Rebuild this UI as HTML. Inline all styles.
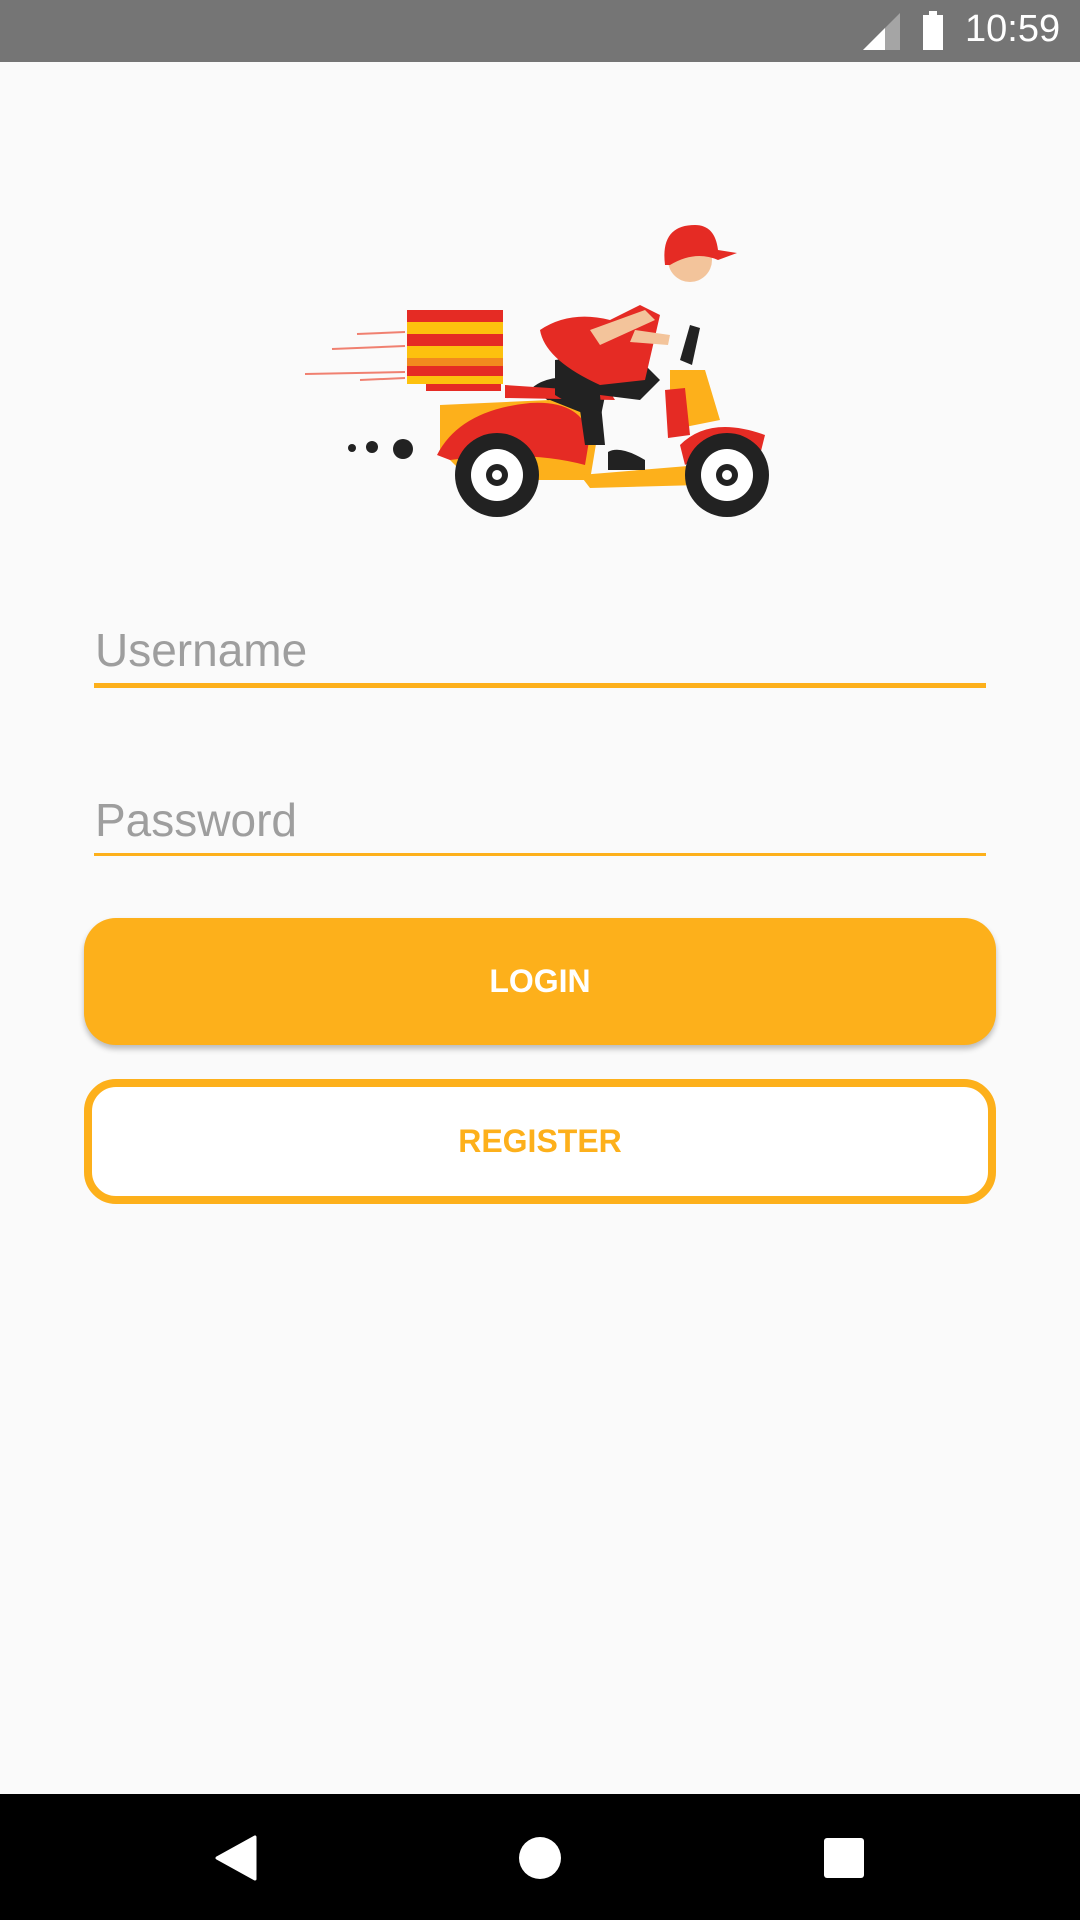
<!DOCTYPE html>
<html><head><meta charset="utf-8"><style>
body{margin:0;width:1080px;height:1920px;background:#fafafa;position:relative;overflow:hidden;font-family:"Liberation Sans",sans-serif}
.sb{position:absolute;left:0;top:0;width:1080px;height:62px;background:#757575}
.nav{position:absolute;left:0;top:1794px;width:1080px;height:126px;background:#000}
.lbl{position:absolute;left:95px;font-size:46px;color:#9e9e9e;line-height:1}
.ul{position:absolute;left:94px;width:892px;background:#fdb01b}
.btn{position:absolute;left:84px;width:912px;box-sizing:border-box;border-radius:32px;display:flex;align-items:center;justify-content:center;font-weight:bold;font-size:32px}
</style></head><body>
<div class="sb">
<svg style="position:absolute;left:863px;top:13px" width="38" height="38"><polygon points="0,37 37,0 37,37" fill="#a5a5a5"/><polygon points="0,37 22,15 22,37" fill="#fff"/></svg>
<div style="position:absolute;left:923px;top:15px;width:20px;height:35px;background:#fff"></div>
<div style="position:absolute;left:929px;top:11px;width:8px;height:5px;background:#fff"></div>
<div style="position:absolute;left:965px;top:8px;color:#fff;font-size:38px">10:59</div>
</div>
<svg style="position:absolute;left:300px;top:220px" width="480" height="300" viewBox="0 0 480 300">
<g stroke="#f08070" stroke-width="2"><line x1="57" y1="114" x2="105" y2="112"/><line x1="32" y1="129" x2="105" y2="126"/><line x1="5" y1="154" x2="105" y2="152"/><line x1="60" y1="160" x2="105" y2="158"/></g>
<rect x="107" y="90" width="96" height="12" fill="#e52b24"/><rect x="107" y="102" width="96" height="12" fill="#fdc10e"/><rect x="107" y="114" width="96" height="12" fill="#e52b24"/><rect x="107" y="126" width="96" height="12" fill="#fdc10e"/><rect x="107" y="138" width="96" height="8" fill="#f28a1e"/><rect x="107" y="146" width="96" height="10" fill="#e52b24"/><rect x="107" y="156" width="96" height="8" fill="#fdc10e"/>
<rect x="126" y="164" width="75" height="7" fill="#e52b24"/>
<g fill="#222"><circle cx="52" cy="228" r="4"/><circle cx="72" cy="227" r="6"/><circle cx="103" cy="229" r="10"/></g>
<path d="M232 168 Q250 152 290 160 L305 176 L300 200 L260 190 Z" fill="#222"/>
<path d="M140 185 L250 180 L300 200 L290 260 L170 260 L140 230 Z" fill="#fdb01b"/>
<path d="M137 235 Q160 190 230 183 Q280 180 290 215 L285 245 Q230 230 150 240 Z" fill="#e52b24"/>
<path d="M205 165 L310 172 L315 180 L205 178 Z" fill="#e52b24"/>
<path d="M370 150 L405 150 L420 200 L370 210 Z" fill="#fdb01b"/>
<path d="M365 170 L385 168 L390 215 L368 218 Z" fill="#e52b24"/>
<path d="M380 225 Q410 195 465 215 L460 235 Q420 220 385 245 Z" fill="#e52b24"/>
<path d="M280 255 L400 245 L400 265 L290 268 Z" fill="#fdb01b"/>
<path d="M255 140 L330 130 L360 160 L340 180 L300 175 L305 225 L285 225 L280 190 L255 175 Z" fill="#222"/>
<path d="M240 110 Q270 90 310 100 L340 85 L360 95 L345 160 L300 165 Q245 140 240 110 Z" fill="#e52b24"/>
<path d="M290 110 L345 90 L355 100 L300 125 Z" fill="#f3c49b"/>
<path d="M335 110 L370 115 L368 125 L330 122 Z" fill="#f3c49b"/>
<circle cx="390" cy="40" r="22" fill="#f3c49b"/>
<path d="M365 45 Q360 5 395 5 Q415 5 418 30 L437 33 L418 40 Q395 30 370 45 Z" fill="#e52b24"/>
<path d="M380 140 L390 105 L400 108 L392 145 Z" fill="#222"/>
<path d="M308 232 Q320 225 345 240 L345 250 L308 250 Z" fill="#222"/>
<circle cx="197" cy="255" r="42" fill="#222"/><circle cx="197" cy="255" r="26" fill="#fff"/><circle cx="197" cy="255" r="11" fill="#222"/><circle cx="197" cy="255" r="5" fill="#fff"/>
<circle cx="427" cy="255" r="42" fill="#222"/><circle cx="427" cy="255" r="26" fill="#fff"/><circle cx="427" cy="255" r="11" fill="#222"/><circle cx="427" cy="255" r="5" fill="#fff"/>
</svg>
<div class="lbl" style="top:627px">Username</div>
<div class="ul" style="top:683px;height:5px"></div>
<div class="lbl" style="top:797px">Password</div>
<div class="ul" style="top:853px;height:3px"></div>
<div class="btn" style="top:918px;height:127px;background:#fdb01b;color:#fff;box-shadow:0 4px 6px rgba(0,0,0,0.25)">LOGIN</div>
<div class="btn" style="top:1079px;height:125px;border:8px solid #fdb01b;color:#fdb01b;background:#fff">REGISTER</div>
<div class="nav">
<svg style="position:absolute;left:215px;top:41px" width="42" height="46"><polygon points="40,2 40,44 2,23" fill="#fff" stroke="#fff" stroke-width="3" stroke-linejoin="round"/></svg>
<div style="position:absolute;left:519px;top:43px;width:42px;height:42px;border-radius:50%;background:#fff"></div>
<div style="position:absolute;left:824px;top:44px;width:40px;height:40px;border-radius:3px;background:#fff"></div>
</div>
</body></html>
